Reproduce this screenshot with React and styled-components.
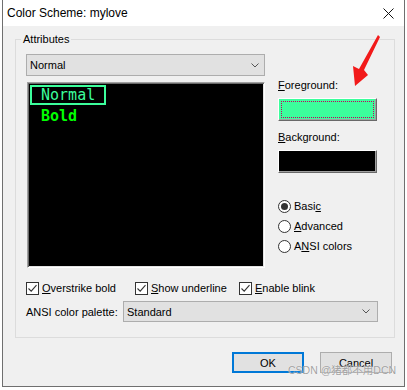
import React from "react";
import styled, { createGlobalStyle } from "styled-components";

const GlobalStyle = createGlobalStyle`
  body {
    margin: 0;
    background: #fff;
    font-family: "Liberation Sans", Arial, sans-serif;
    font-size: 11px;
    color: #000;
  }
`;

const Window = styled.div`
  position: relative;
  width: 403px;
  height: 387px;
  margin-left: 2px;
  box-sizing: border-box;
  border: 1px solid #6f6f6f;
  border-top: none;
  background: #f0f0f0;
  display: flex;
  flex-direction: column;
`;

const TitleBar = styled.div`
  height: 26px;
  background: #fff;
  display: flex;
  align-items: center;
  justify-content: space-between;
  padding: 0 10px 0 4px;
  font-size: 12px;
`;

const Body = styled.div`
  flex: 1;
  display: flex;
  flex-direction: column;
  padding: 7px 9px 0 12px;
`;

const GroupBox = styled.fieldset`
  margin: 0;
  padding: 8px 16px 15px 10px;
  border: 1px solid #dcdcdc;
  min-width: 0;
`;

const Legend = styled.legend`
  padding: 0 2px;
  margin-left: -5px;
  line-height: 13px;
`;

const TopGrid = styled.div`
  display: grid;
  grid-template-columns: 239px 99px;
  column-gap: 13px;
`;

const Select = styled.div`
  height: ${(p) => p.$h || 22}px;
  box-sizing: border-box;
  border: 1px solid #adadad;
  background: #e1e1e1;
  display: flex;
  align-items: center;
  justify-content: space-between;
  padding: 0 ${(p) => p.$pr || 5}px 0 3px;
`;

const Preview = styled.div`
  margin: 6px 0 0 1px;
  width: 238px;
  height: 186px;
  box-sizing: border-box;
  background: #000;
  border: 1px solid;
  border-color: #a0a0a0 #fff #fff #a0a0a0;
  box-shadow: inset 1px 1px 0 #696969, inset -1px -1px 0 #e3e3e3;
  padding: 2px 0 0 2px;
  font-family: "DejaVu Sans Mono", "Liberation Mono", monospace;
  font-size: 15px;
`;

const SelectedCell = styled.div`
  display: inline-block;
  border: 2px solid #3cfe9c;
  color: #3cfe9c;
  line-height: 16px;
  white-space: pre;
`;

const BoldLine = styled.div`
  margin-top: 3px;
  padding-left: 11px;
  line-height: 17px;
  font-weight: bold;
  color: #00ff00;
`;

const SideColumn = styled.div`
  display: flex;
  flex-direction: column;
`;

const FieldLabel = styled.div`
  line-height: 13px;
  margin-top: ${(p) => p.$mt}px;
`;

const Swatch = styled.div`
  margin-top: 6px;
  height: 23px;
  box-sizing: border-box;
  background: ${(p) => p.$color};
  border: 1px solid;
  border-color: #fff #696969 #696969 #fff;
  box-shadow: inset -1px -1px 0 #a0a0a0;
  outline: ${(p) => (p.$focused ? "1px dotted #c3005f" : "none")};
  outline-offset: -4px;
`;

const RadioGroup = styled.div`
  margin-top: 23px;
  display: flex;
  flex-direction: column;
`;

const OptionRow = styled.label`
  height: 20px;
  display: flex;
  align-items: center;
  gap: 3px;
`;

const RadioCircle = styled.span`
  width: 13px;
  height: 13px;
  box-sizing: border-box;
  border: 1px solid #333;
  border-radius: 50%;
  background: #fff;
  display: flex;
  align-items: center;
  justify-content: center;
  &::after {
    content: "";
    width: 7px;
    height: 7px;
    border-radius: 50%;
    background: ${(p) => (p.$checked ? "#333" : "transparent")};
  }
`;

const CheckBox = styled.span`
  width: 13px;
  height: 13px;
  box-sizing: border-box;
  border: 1px solid #333;
  background: #fff;
  display: flex;
  align-items: center;
  justify-content: center;
`;

const Mn = styled.span`
  text-decoration: underline;
`;

const CheckRow = styled.div`
  margin-top: 10px;
  display: grid;
  grid-template-columns: 109px 104px 1fr;
`;

const PaletteRow = styled.div`
  margin-top: 3px;
  display: grid;
  grid-template-columns: 97px 1fr;
  align-items: center;
`;

const ButtonRow = styled.div`
  margin-top: 14px;
  display: flex;
  justify-content: flex-end;
  gap: 16px;
  padding-right: 3px;
`;

const Button = styled.button`
  width: 72px;
  height: 21px;
  box-sizing: border-box;
  padding: 0;
  background: #e1e1e1;
  border: ${(p) => (p.$default ? "2px solid #0078d7" : "1px solid #adadad")};
  font-family: inherit;
  font-size: 11px;
  color: #000;
`;

const Watermark = styled.div`
  position: absolute;
  left: 285px;
  top: 362px;
  font-size: 10.5px;
  font-family: "Liberation Sans", "Noto Sans CJK SC", sans-serif;
  color: rgba(120, 120, 120, 0.7);
  text-shadow: 0 0 1px #fff;
  pointer-events: none;
`;

const Arrow = styled.svg`
  position: absolute;
  left: 348px;
  top: 34px;
`;

const Chevron = () => (
  <svg width="8" height="5" viewBox="0 0 8 5">
    <path d="M0.5 0.5 L4 4 L7.5 0.5" fill="none" stroke="#555" strokeWidth="1" />
  </svg>
);

const Check = () => (
  <svg width="11" height="11" viewBox="0 0 11 11">
    <path d="M1.5 5.5 L4.2 8.2 L9.5 2.2" fill="none" stroke="#333" strokeWidth="1.1" />
  </svg>
);

const Radio = ({ checked, children }) => (
  <OptionRow>
    <RadioCircle $checked={checked} />
    <span>{children}</span>
  </OptionRow>
);

const CheckOption = ({ children }) => (
  <OptionRow>
    <CheckBox>
      <Check />
    </CheckBox>
    <span>{children}</span>
  </OptionRow>
);

export default function App() {
  return (
    <>
      <GlobalStyle />
      <Window>
        <TitleBar>
          <span>Color Scheme: mylove</span>
          <svg width="11" height="11" viewBox="0 0 11 11">
            <path d="M0.5 0.5 L10.5 10.5 M10.5 0.5 L0.5 10.5" stroke="#111" strokeWidth="1" />
          </svg>
        </TitleBar>
        <Body>
          <GroupBox>
            <Legend>Attributes</Legend>
            <TopGrid>
              <div>
                <Select>
                  <span>Normal</span>
                  <Chevron />
                </Select>
                <Preview>
                  <SelectedCell>{" Normal "}</SelectedCell>
                  <BoldLine>Bold</BoldLine>
                </Preview>
              </div>
              <SideColumn>
                <FieldLabel $mt={25}>
                  <Mn>F</Mn>oreground:
                </FieldLabel>
                <Swatch $color="#3cfe9c" $focused />
                <FieldLabel $mt={10}>
                  <Mn>B</Mn>ackground:
                </FieldLabel>
                <Swatch $color="#000" />
                <RadioGroup>
                  <Radio checked>
                    Basi<Mn>c</Mn>
                  </Radio>
                  <Radio>
                    <Mn>A</Mn>dvanced
                  </Radio>
                  <Radio>
                    A<Mn>N</Mn>SI colors
                  </Radio>
                </RadioGroup>
              </SideColumn>
            </TopGrid>
            <CheckRow>
              <CheckOption>
                <Mn>O</Mn>verstrike bold
              </CheckOption>
              <CheckOption>
                <Mn>S</Mn>how underline
              </CheckOption>
              <CheckOption>
                <Mn>E</Mn>nable blink
              </CheckOption>
            </CheckRow>
            <PaletteRow>
              <span>ANSI color palette:</span>
              <Select $h={21} $pr={7}>
                <span>Standard</span>
                <Chevron />
              </Select>
            </PaletteRow>
          </GroupBox>
          <ButtonRow>
            <Button $default>OK</Button>
            <Button>Cancel</Button>
          </ButtonRow>
        </Body>
        <Arrow width="34" height="54" viewBox="0 0 34 54">
          <polygon points="27,1 29,3 13,36 17,41 4,52 2,32 8,35" fill="#f21a1a" />
        </Arrow>
        <Watermark>CSDN @猪都不用DCN</Watermark>
      </Window>
    </>
  );
}
